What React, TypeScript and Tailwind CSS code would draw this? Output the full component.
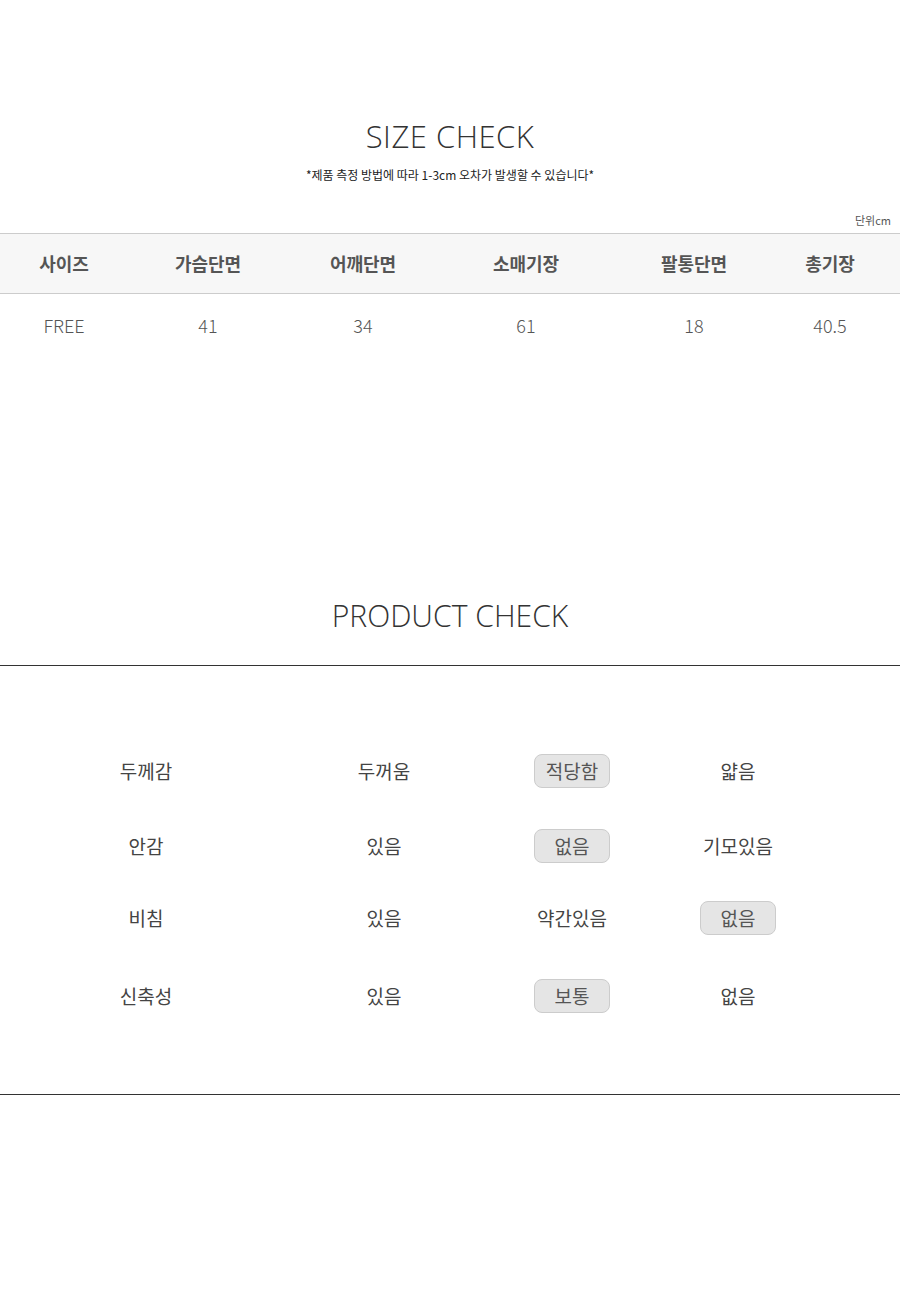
const SIZE_HEAD = ['사이즈', '가슴단면', '어깨단면', '소매기장', '팔통단면', '총기장']
const SIZE_ROW = ['FREE', '41', '34', '61', '18', '40.5']

const CHECKS = [
  { label: '두께감', opts: ['두꺼움', '적당함', '얇음'], on: 1, mt: 'mt-0' },
  { label: '안감', opts: ['있음', '없음', '기모있음'], on: 1, mt: 'mt-[41px]' },
  { label: '비침', opts: ['있음', '약간있음', '없음'], on: 2, mt: 'mt-[38px]' },
  { label: '신축성', opts: ['있음', '보통', '없음'], on: 1, mt: 'mt-[44px]' },
]

const kr = { fontFamily: '"Noto Sans CJK KR", "Noto Sans", sans-serif' }
const cols = 'grid grid-cols-[128px_160px_150px_176px_160px_112px]'

export default function App() {
  return (
    <div className="w-[900px] min-h-[1300px] bg-white text-[#333]" style={kr}>
      {/* size check */}
      <div className="pt-[116px] text-center">
        <h2 className="text-[31px] font-light tracking-[0.5px] text-[#333] leading-[40px]" style={{ fontFamily: '"Open Sans", sans-serif' }}>
          SIZE CHECK
        </h2>
        <p className="mt-[11px] text-[12px] leading-[16px] text-[#222]">*제품 측정 방법에 따라 1-3cm 오차가 발생할 수 있습니다*</p>
      </div>
      <div className="mt-[30px] pr-[9px] text-right text-[11px] leading-[14px] text-[#555]">단위cm</div>
      <div className={`${cols} mt-[6px] h-[61px] items-center bg-[#f7f7f7] border-y border-[#ccc]`}>
        {SIZE_HEAD.map(h => (
          <div key={h} className="text-center text-[18px] font-bold text-[#555]">{h}</div>
        ))}
      </div>
      <div className={`${cols} h-[62px] items-center`}>
        {SIZE_ROW.map((v, i) => (
          <div key={i} className="text-center text-[18px] text-[#555] font-light">{v}</div>
        ))}
      </div>

      {/* product check */}
      <div className="mt-[239px] text-center">
        <h2 className="text-[31px] font-light text-[#333] leading-[40px] scale-x-[0.97]" style={{ fontFamily: '"Open Sans", sans-serif' }}>
          PRODUCT CHECK
        </h2>
      </div>
      <div className="mt-[30px] border-t border-[#333]" />
      <div className="flex flex-col pt-[88px] pb-[81px]">
        {CHECKS.map(row => (
          <div key={row.label} className={`${row.mt} grid grid-cols-[292px_184px_192px_140px] h-[34px] items-center`}>
            <div className="text-center text-[19px] text-[#444]">{row.label}</div>
            {row.opts.map((o, i) => (
              <div key={o + i} className="flex justify-center">
                {i === row.on ? (
                  <span className="w-[76px] h-[34px] flex items-center justify-center rounded-[8px] bg-[#e5e5e5] border border-[#ccc] text-[19px] text-[#555]">
                    {o}
                  </span>
                ) : (
                  <span className="text-[19px] text-[#444]">{o}</span>
                )}
              </div>
            ))}
          </div>
        ))}
      </div>
      <div className="border-t border-[#333]" />
    </div>
  )
}
